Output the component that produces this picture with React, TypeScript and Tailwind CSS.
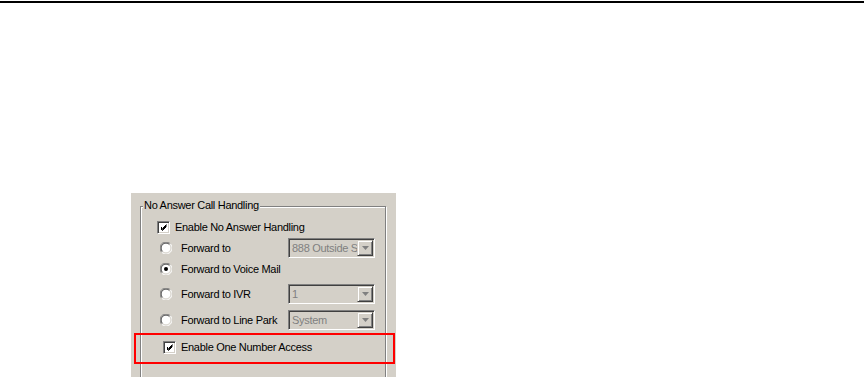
import type { ReactNode } from "react";

const font = { fontFamily: '"Liberation Sans", Arial, sans-serif' };

function Checkbox() {
  return (
    <span className="relative block w-[13px] h-[13px] shrink-0 bg-white border border-t-[#808080] border-l-[#808080] border-r-white border-b-white shadow-[inset_1px_1px_0_#404040,inset_-1px_-1px_0_#d4d0c8]">
      <svg viewBox="0 0 11 11" className="absolute inset-0 w-[11px] h-[11px]">
        <path d="M3 5 L4.5 6.5 L8.5 2.5 M3 6 L4.5 7.5 L8.5 3.5 M3 7 L4.5 8.5 L8.5 4.5" stroke="#000" strokeWidth="1" fill="none" />
      </svg>
    </span>
  );
}

function Radio({ checked = false }: { checked?: boolean }) {
  return (
    <svg viewBox="0 0 12 12" className="w-[12px] h-[12px] shrink-0">
      <circle cx="6" cy="6" r="5.5" fill="#fff" />
      <path d="M1.7 10.3 A5.5 5.5 0 0 1 10.3 1.7" stroke="#808080" strokeWidth="1" fill="none" />
      <path d="M2.5 9.5 A4.5 4.5 0 0 1 9.5 2.5" stroke="#404040" strokeWidth="1" fill="none" />
      <path d="M10.3 1.7 A5.5 5.5 0 0 1 1.7 10.3" stroke="#fff" strokeWidth="1" fill="none" />
      <path d="M9.5 2.5 A4.5 4.5 0 0 1 2.5 9.5" stroke="#d4d0c8" strokeWidth="1" fill="none" />
      {checked && <circle cx="6" cy="6" r="2" fill="#000" />}
    </svg>
  );
}

function Combo({ value }: { value: string }) {
  return (
    <div className="flex items-center w-[87px] h-[20px] bg-[#d4d0c8] border border-t-[#808080] border-l-[#808080] border-r-white border-b-white shadow-[inset_1px_1px_0_#404040,inset_-1px_-1px_0_#d4d0c8]">
      <span className="flex-1 overflow-hidden whitespace-nowrap pl-[3px] text-[11px] leading-[16px] text-[#808080]">
        {value}
      </span>
      <span className="flex items-center justify-center w-[16px] h-[16px] mr-[1px] bg-[#d4d0c8] border border-t-[#d4d0c8] border-l-[#d4d0c8] border-r-[#404040] border-b-[#404040] shadow-[inset_1px_1px_0_#fff,inset_-1px_-1px_0_#808080]">
        <svg viewBox="0 0 7 4" className="w-[7px] h-[4px]">
          <path d="M0 0 H7 L3.5 4 Z" fill="#808080" />
        </svg>
      </span>
    </div>
  );
}

function RadioRow({ label, checked, combo, className }: { label: string; checked?: boolean; combo?: ReactNode; className: string }) {
  return (
    <div className={`flex items-center h-[20px] pl-[19px] ${className}`}>
      <Radio checked={checked} />
      <span className="ml-[9px] w-[107px] whitespace-nowrap text-[11px] text-black">{label}</span>
      {combo}
    </div>
  );
}

export default function App() {
  return (
    <div className="w-[864px] h-[377px] bg-white overflow-hidden tracking-[-0.3px]" style={font}>
      <div className="mt-px border-t-2 border-black" />
      <div className="relative ml-[131px] mt-[190px] w-[265px] h-[184px] bg-[#d4d0c8] overflow-hidden">
        <div className="relative ml-[9px] mt-[13px] mr-[10px] h-[300px] border border-[#808080] shadow-[inset_1px_1px_0_#fff,1px_1px_0_#fff]">
          <span className="absolute left-[2px] -top-[8px] px-[1px] bg-[#d4d0c8] text-[11px] leading-[13px] text-black whitespace-nowrap">
            No Answer Call Handling
          </span>

          <div className="flex items-center h-[20px] mt-[10px] pl-[16px]">
            <Checkbox />
            <span className="ml-[5px] text-[11px] text-black whitespace-nowrap">Enable No Answer Handling</span>
          </div>

          <RadioRow className="mt-[1px]" label="Forward to" combo={<Combo value="888 Outside Sales" />} />
          <RadioRow className="mt-[1px]" label="Forward to Voice Mail" checked />
          <RadioRow className="mt-[5px]" label="Forward to IVR" combo={<Combo value="1" />} />
          <RadioRow className="mt-[6px]" label="Forward to Line Park" combo={<Combo value="System" />} />

          <div className="flex items-center h-[20px] mt-[7px] pl-[22px]">
            <Checkbox />
            <span className="ml-[5px] text-[11px] text-black whitespace-nowrap">Enable One Number Access</span>
          </div>
        </div>

        <div className="absolute left-[3px] top-[140px] w-[261px] h-[31px] border-2 border-[#ff0000]" />
      </div>
    </div>
  );
}
